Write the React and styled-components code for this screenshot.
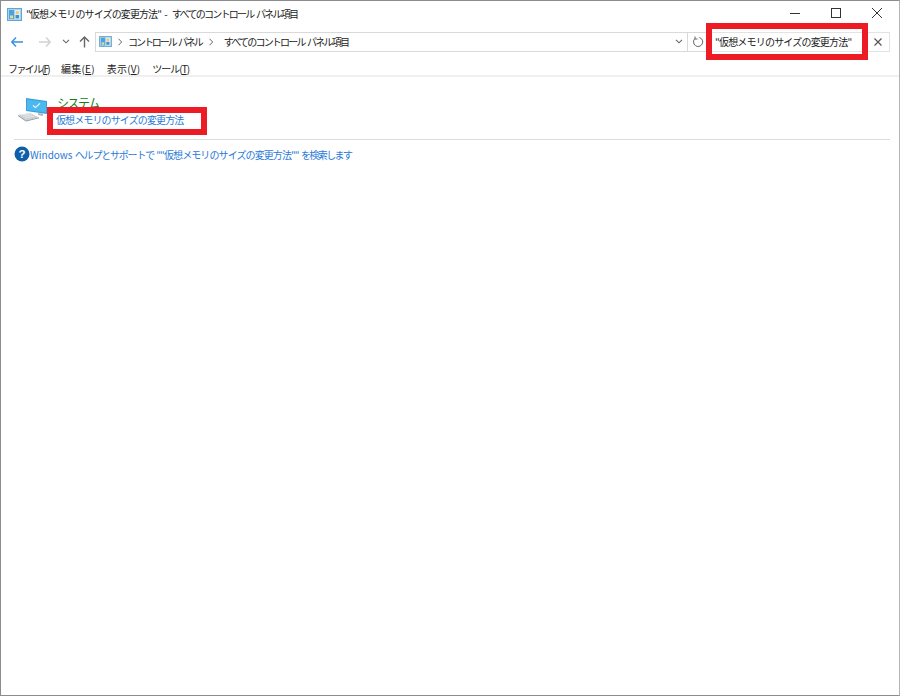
import React from 'react';
import styled, { createGlobalStyle } from 'styled-components';

const Global = createGlobalStyle`
  html, body { margin: 0; padding: 0; background: #fff; }
  body { font-family: "Noto Sans CJK JP", "Noto Sans", sans-serif; }
`;
const Win = styled.div`
  position: relative; box-sizing: border-box; width: 900px; height: 696px; background: #fff;
  border: 1px solid #8c8c8c; border-right-color: #b5b5b5; overflow: hidden; display: flex; flex-direction: column;
`;
const TitleBar = styled.div`
  height: 26px; display: flex; align-items: center; padding: 0 0 0 6px; gap: 4px; flex: none;
`;
const TitleText = styled.div`
  font-size: 10px; color: #222; white-space: pre; flex: 1; line-height: 26px;
`;
const Seg = styled.span`letter-spacing: ${p => p.$ls}px; word-spacing: ${p => p.$ws || 0}px; white-space: pre;`;
const WinButtons = styled.div`display: flex; height: 26px; align-items: flex-start; padding-right: 2px;`;
const WinBtn = styled.div`width: 41px; height: 24px; display: flex; align-items: center; justify-content: center;`;
const NavBar = styled.div`
  height: 21px; display: flex; align-items: center; padding-left: 8px; flex: none; margin-top: 4px;
`;
const NavButton = styled.div`width: ${p => p.$w}px; margin-left: ${p => p.$ml || 0}px; height: 20px; display: flex; align-items: center; justify-content: center; flex: none;`;
const Address = styled.div`
  width: 593px; height: 20px; box-sizing: border-box; border: 1px solid #d9d9d9; flex: none;
  display: flex; align-items: center; padding-left: 3px; font-size: 10px; color: #222;
`;
const Crumb = styled.span`white-space: pre; display: flex; align-items: center; margin-left: ${p => p.$ml || 0}px;`;
const DropCrumb = styled.span`display: flex; margin-left: auto; padding-right: 4px;`;
const Refresh = styled.div`
  width: 20px; height: 20px; box-sizing: border-box; border: 1px solid #d9d9d9; border-left: none; display: flex; align-items: center; justify-content: center; flex: none;
`;
const Search = styled.div`
  width: 182px; height: 20px; box-sizing: border-box; border: 1px solid #e3e3e3; border-left: none; display: flex; align-items: center; flex: none;
`;
const SearchText = styled.span`
  font-size: 10px; letter-spacing: -0.8px; color: #222; white-space: pre; margin-left: 7px; flex: 1;
`;
const ClearBtn = styled.div`width: 22px; display: flex; justify-content: center;`;
const Menu = styled.div`
  height: 18px; margin-top: 7px; display: flex; align-items: center; padding: 2px 0 0 7px; gap: 12px; border-bottom: 2px solid #efefef; flex: none;
  font-size: 10px; color: #222; box-sizing: border-box;
`;
const MenuItem = styled.span`white-space: pre; letter-spacing: ${p => p.$ls}px;`;
const Mnemonic = styled.span`text-decoration: underline;`;
const Content = styled.div`flex: 1; padding: 21px 9px 0 13px;`;
const Result = styled.div`display: flex; gap: 8px; height: 42px; padding-left: 4px; border-bottom: 1px solid #dcdcdc; box-sizing: border-box;`;
const ResultText = styled.div`display: flex; flex-direction: column; margin-top: -3px;`;
const ResultTitle = styled.div`font-size: 12px; line-height: 15px; color: #0f7f1a; letter-spacing: -1.5px; padding-left: 1px;`;
const ResultLink = styled.a`font-size: 10px; line-height: 15px; margin-top: 2px; color: #2a7ad8; letter-spacing: -0.88px; white-space: pre;`;
const Help = styled.div`display: flex; align-items: center; height: 16px; margin-top: 6px; font-size: 10px; color: #2a7ad8; white-space: pre;`;
const RedBox = styled.div`
  position: absolute; box-sizing: border-box; border: 6px solid #ed1c24;
  left: ${p => p.$x}px; top: ${p => p.$y}px; width: ${p => p.$w}px; height: ${p => p.$h}px;
`;

const CpIcon = ({ s = 15 }) => (
  <svg width={s} height={Math.round(s * 0.87)} viewBox="0 0 15 13" style={{ flex: 'none' }}>
    <rect x="0.5" y="0.5" width="14" height="12" fill="#a9d5ef" stroke="#6aa3c9" />
    <rect x="2" y="2" width="5.5" height="9" fill="#4aa3e0" />
    <rect x="7.5" y="2" width="5.5" height="9" fill="#dcecf5" />
    <circle cx="10.2" cy="4.6" r="1.6" fill="#eecb6c" />
    <rect x="8.5" y="7" width="3.6" height="3.4" fill="#3c93d2" />
    <rect x="3" y="7.5" width="3" height="2.8" fill="#f0d98c" />
  </svg>
);
const Arrow = ({ color, d }) => (
  <svg width="13" height="12" viewBox="0 0 13 12" fill="none" stroke={color} strokeWidth="1.4"><path d={d} /></svg>
);
const Chevron = () => (
  <svg width="8" height="8" viewBox="0 0 8 8" fill="none" stroke="#666" strokeWidth="1"><path d="M2.5 0.8 L5.7 4 L2.5 7.2" /></svg>
);
const Down = () => (
  <svg width="8" height="5" viewBox="0 0 8 5" fill="none" stroke="#666" strokeWidth="1.1"><path d="M1 0.8 L4 3.8 L7 0.8" /></svg>
);
const Pc = () => (
  <svg width="30" height="24" viewBox="0 0 30 24" style={{ flex: 'none' }}>
    <path d="M8 0 L29 3 L29 16 L8 13 Z" fill="#3d9fe0" />
    <path d="M9 1.5 L28 4 L28 14.6 L9 12 Z" fill="#4cb9ee" />
    <path d="M15 7.4 L17.4 9.6 L22 5.4" stroke="#fff" strokeWidth="1.1" fill="none" />
    <path d="M20 15 L20 17 L25 18 L25 15.8 Z" fill="#aab6be" />
    <path d="M0 17 L12 15 L21 19.4 L8 22.6 Z" fill="#c9cfd3" />
    <path d="M8 22.6 L21 19.4 L21 20.3 L8 23.6 L0 18 L0 17 Z" fill="#8d969c" />
    <path d="M3 17 L12 15.8 M5 18.3 L14 16.9 M7 19.8 L16.5 18.2" stroke="#eef1f3" strokeWidth="0.7" />
  </svg>
);
const HelpIcon = () => (
  <svg width="16" height="16" viewBox="0 0 16 16" style={{ flex: 'none' }}>
    <circle cx="8" cy="8" r="7.5" fill="#0f5fa8" />
    <text x="8" y="12" textAnchor="middle" fontSize="11.5" fontWeight="700" fill="#fff" fontFamily="Liberation Sans, sans-serif">?</text>
  </svg>
);

export default function App() {
  return (
    <>
      <Global />
      <Win>
        <TitleBar>
          <CpIcon />
          <TitleText>
            <Seg $ls={-0.88}>"仮想メモリのサイズの変更方法"</Seg>
            <Seg $ls={1}> - </Seg>
            <Seg $ls={-1.75} $ws={2}>すべてのコントロール パネル項目</Seg>
          </TitleText>
          <WinButtons>
            <WinBtn>
              <svg width="10" height="10" viewBox="0 0 10 10"><path d="M0 5.5 H10" stroke="#333" strokeWidth="1" /></svg>
            </WinBtn>
            <WinBtn>
              <svg width="10" height="10" viewBox="0 0 10 10"><rect x="0.5" y="0.5" width="9" height="9" fill="none" stroke="#333" /></svg>
            </WinBtn>
            <WinBtn>
              <svg width="10" height="10" viewBox="0 0 10 10"><path d="M0 0 L10 10 M10 0 L0 10" stroke="#333" strokeWidth="1" /></svg>
            </WinBtn>
          </WinButtons>
        </TitleBar>
        <NavBar>
          <NavButton $w={16}><Arrow color="#3a8ee6" d="M0.5 6 H12 M5 1.5 L0.8 6 L5 10.5" /></NavButton>
          <NavButton $w={30} $ml={4}><Arrow color="#d2d2d2" d="M1 6 H12.5 M8 1.5 L12.2 6 L8 10.5" /></NavButton>
          <NavButton $w={14}><Down /></NavButton>
          <NavButton $w={22}><Arrow color="#666" d="M6.5 11.5 V1 M2 5.5 L6.5 1 L11 5.5" /></NavButton>
          <Address>
            <CpIcon s={13} />
            <Crumb $ml={4}><Chevron /></Crumb>
            <Crumb $ml={4}><Seg $ls={-2.05} $ws={2}>コントロール パネル</Seg></Crumb>
            <Crumb $ml={5}><Chevron /></Crumb>
            <Crumb $ml={9}><Seg $ls={-1.8} $ws={2}>すべてのコントロール パネル項目</Seg></Crumb>
            <DropCrumb><Down /></DropCrumb>
          </Address>
          <Refresh>
            <svg width="12" height="12" viewBox="0 0 12 12" fill="none" stroke="#666" strokeWidth="1"><path d="M7.5 1.5 A4.6 4.6 0 1 1 3 2.5 M3 0.5 V3 H5.5" /></svg>
          </Refresh>
          <Search>
            <SearchText>"仮想メモリのサイズの変更方法"</SearchText>
            <ClearBtn>
              <svg width="8" height="8" viewBox="0 0 8 8"><path d="M0.5 0.5 L7.5 7.5 M7.5 0.5 L0.5 7.5" stroke="#555" strokeWidth="1.2" /></svg>
            </ClearBtn>
          </Search>
        </NavBar>
        <Menu>
          <MenuItem $ls={-1.6}>ファイル(<Mnemonic>F</Mnemonic>)</MenuItem>
          <MenuItem $ls={0.2}>編集(<Mnemonic>E</Mnemonic>)</MenuItem>
          <MenuItem $ls={0.2}>表示(<Mnemonic>V</Mnemonic>)</MenuItem>
          <MenuItem $ls={-1}>ツール(<Mnemonic>T</Mnemonic>)</MenuItem>
        </Menu>
        <Content>
          <Result>
            <Pc />
            <ResultText>
              <ResultTitle>システム</ResultTitle>
              <ResultLink>仮想メモリのサイズの変更方法</ResultLink>
            </ResultText>
          </Result>
          <Help>
            <HelpIcon />
            <Seg $ls={0}>Windows </Seg>
            <Seg $ls={-1.2}>ヘルプとサポートで</Seg>
            <Seg $ls={0}> </Seg>
            <Seg $ls={-0.9}>""仮想メモリのサイズの変更方法""</Seg>
            <Seg $ls={0}> </Seg>
            <Seg $ls={-1.6}>を検索します</Seg>
          </Help>
        </Content>
        <RedBox $x={705} $y={22} $w={162} $h={37} />
        <RedBox $x={46} $y={106} $w={160} $h={28} />
      </Win>
    </>
  );
}
